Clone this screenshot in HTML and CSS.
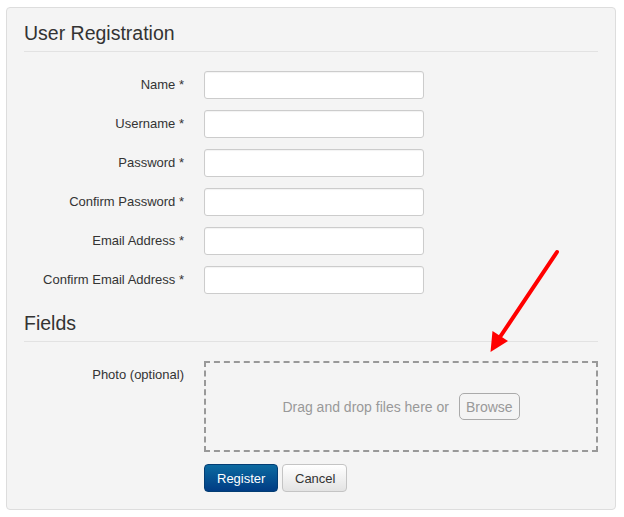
FILE: index.html
```html
<!DOCTYPE html>
<html>
<head>
<meta charset="utf-8">
<link rel="stylesheet" href="styles.css">
</head>
<body>
<div class="panel">
  <div class="legend">User Registration</div>
  <div class="rows">
    <div class="row"><label class="lbl">Name *</label><input class="inp" type="text"></div>
    <div class="row"><label class="lbl">Username *</label><input class="inp" type="text"></div>
    <div class="row"><label class="lbl">Password *</label><input class="inp" type="password"></div>
    <div class="row"><label class="lbl">Confirm Password *</label><input class="inp" type="password"></div>
    <div class="row"><label class="lbl">Email Address *</label><input class="inp" type="text"></div>
    <div class="row"><label class="lbl">Confirm Email Address *</label><input class="inp" type="text"></div>
  </div>
  <div class="legend legend-2">Fields</div>
  <div class="row row-photo">
    <label class="lbl">Photo (optional)</label>
    <div class="drop">
      <span class="drop-text">Drag and drop files here or</span>
      <button class="browse" type="button">Browse</button>
    </div>
  </div>
  <div class="actions">
    <button class="btn btn-primary" type="button">Register</button>
    <button class="btn btn-default" type="button">Cancel</button>
  </div>
</div>
<svg class="arrow" width="624" height="517" viewBox="0 0 624 517">
  <line x1="557" y1="252" x2="500" y2="337" stroke="#ff0000" stroke-width="4" stroke-linecap="round"/>
  <polygon points="490.5,352 492.5,331 508,341" fill="#ff0000"/>
</svg>
</body>
</html>
```
FILE: styles.css
```css
html, body {
  margin: 0;
  padding: 0;
  background: #ffffff;
}
body {
  font-family: "Liberation Sans", Arial, sans-serif;
  color: #333333;
  width: 624px;
  height: 517px;
  position: relative;
  overflow: hidden;
}
.panel {
  margin: 7px 0 0 6px;
  width: 574px;
  padding: 13px 17px 17px 17px;
  background: #f4f4f4;
  border: 1px solid #dddddd;
  border-radius: 4px;
}
.legend {
  font-size: 19.5px;
  line-height: 24px;
  color: #333333;
  padding-bottom: 6px;
  border-bottom: 1px solid #e2e2e2;
}
.legend-2 {
  margin-top: 17px;
}
.rows {
  margin-top: 19px;
}
.row {
  display: flex;
  align-items: flex-start;
  margin-bottom: 11px;
}
.lbl {
  width: 160px;
  flex: none;
  text-align: right;
  font-size: 13px;
  line-height: 18px;
  padding-top: 5px;
  margin-right: 20px;
  color: #333333;
}
.inp {
  box-sizing: border-box;
  width: 220px;
  height: 28px;
  margin: 0;
  border: 1px solid #cccccc;
  border-radius: 3px;
  background: #ffffff;
  box-shadow: inset 0 1px 1px rgba(0,0,0,0.05);
  font-family: inherit;
  font-size: 13px;
  padding: 4px 6px;
}
.row-photo {
  margin-top: 19px;
  margin-bottom: 12px;
}
.drop {
  box-sizing: border-box;
  flex: 1;
  height: 91px;
  border: 2px dashed #999999;
  display: flex;
  align-items: center;
  justify-content: center;
  gap: 10px;
  padding-left: 0;
}
.drop-text {
  font-size: 14px;
  color: #999999;
}
.browse {
  box-sizing: border-box;
  height: 27px;
  padding: 0 6px;
  border: 1px solid #aaaaaa;
  border-radius: 5px;
  background: transparent;
  font-family: inherit;
  font-size: 14px;
  color: #999999;
}
.actions {
  display: flex;
  gap: 4px;
  padding-left: 180px;
}
.btn {
  box-sizing: border-box;
  height: 28px;
  padding: 0 12px;
  border-radius: 4px;
  font-family: inherit;
  font-size: 13px;
  border: 1px solid #cccccc;
}
.btn-primary {
  width: 74px;
  color: #ffffff;
  background: linear-gradient(#0c6aa0, #003c84);
  border-color: #033d73;
}
.btn-default {
  width: 65px;
  color: #333333;
  background: linear-gradient(#ffffff, #e3e3e3);
  border-color: #c4c4c4;
}
.arrow {
  position: absolute;
  left: 0;
  top: 0;
  pointer-events: none;
}
```
